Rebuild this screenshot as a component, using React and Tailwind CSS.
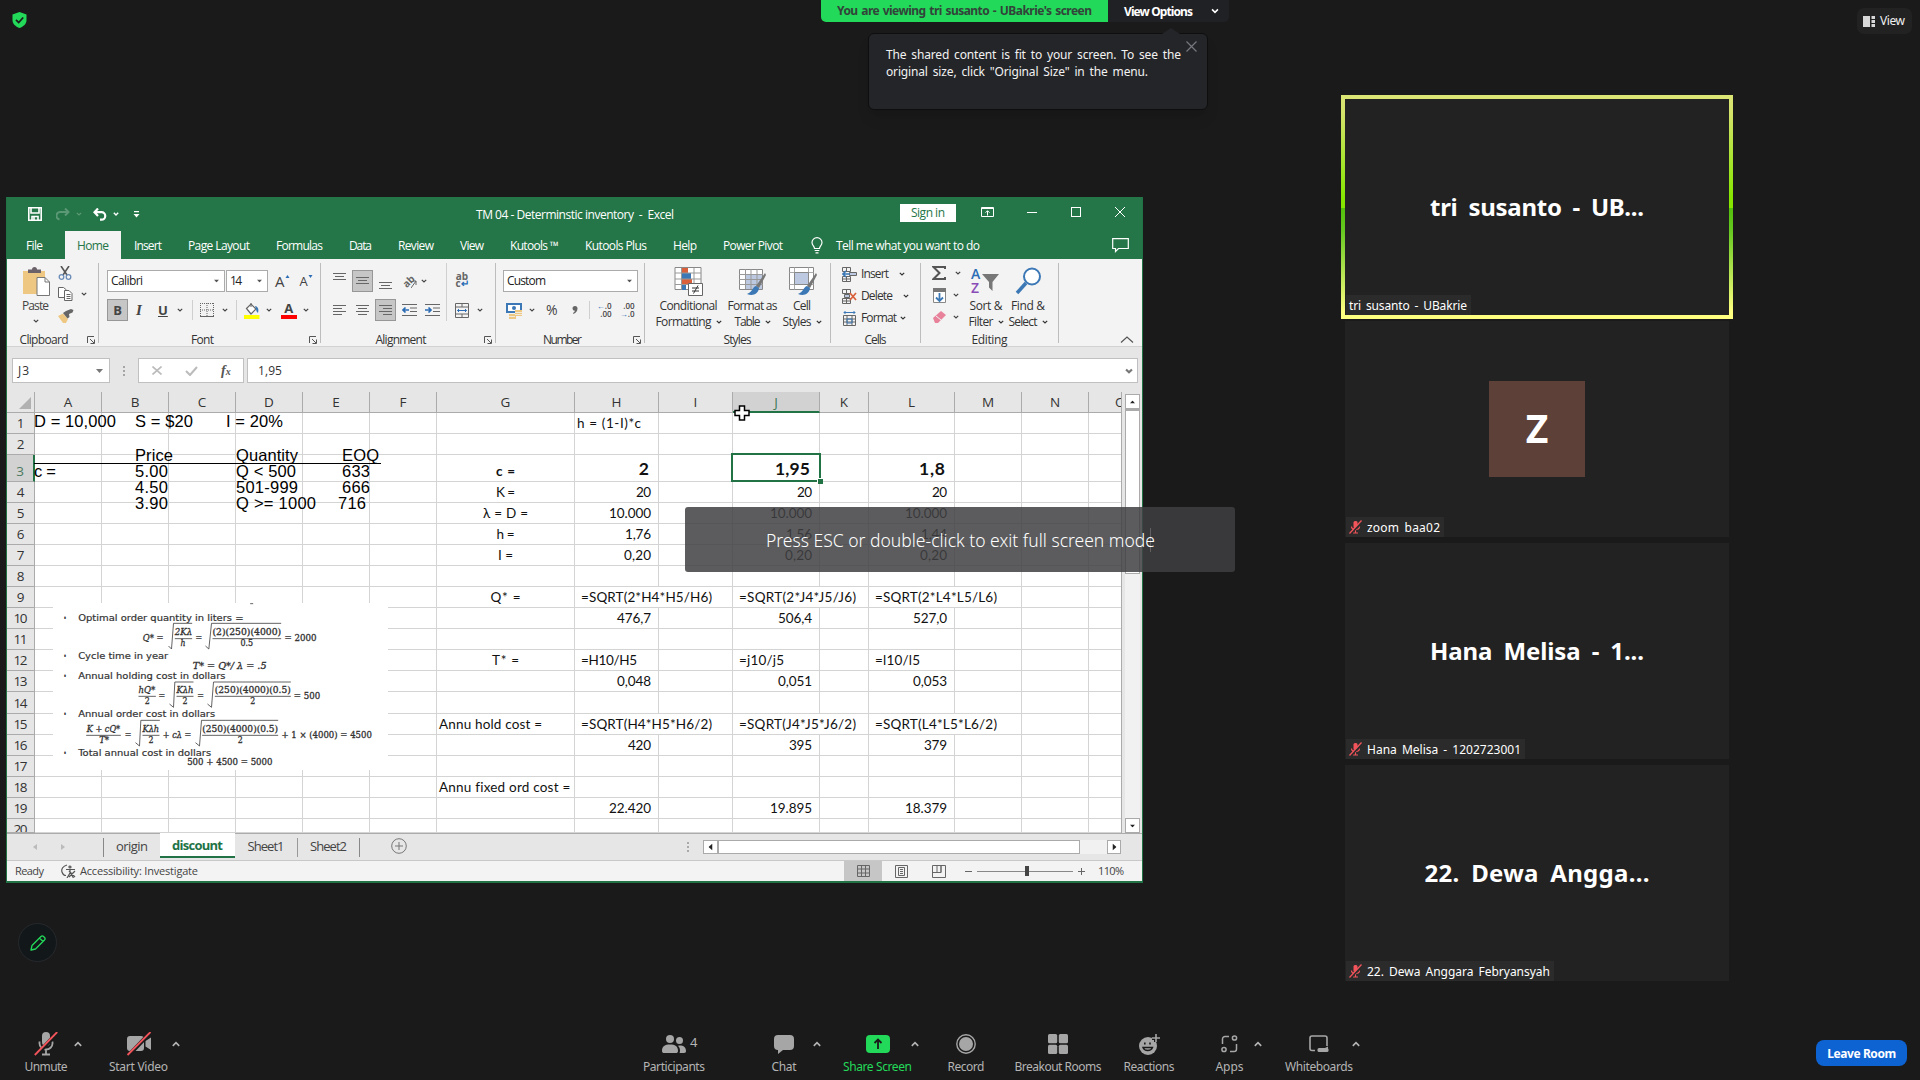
import React, { useLayoutEffect, useRef, useState } from 'react'
import clsx from 'clsx'

// Text set to a fixed width, the letters are spread or tightened to fill it
function Txt({ w, className, children }) {
  const ref = useRef(null)
  const [spacing, setSpacing] = useState(null)

  useLayoutEffect(() => {
    const natural = ref.current.getBoundingClientRect().width
    const n = String(children).length
    if (n > 1) setSpacing((w - natural) / (n - 1))
  }, [])

  return (
    <span
      ref={ref}
      className={clsx('inline-block whitespace-pre shrink-0', className)}
      style={spacing === null ? undefined : { letterSpacing: spacing, width: w }}
    >
      {children}
    </span>
  )
}

function Chevron({ className, size = 6, up = false, stroke = 1.2 }) {
  return (
    <svg width={size} height={size} viewBox="0 0 6 6" className={clsx('shrink-0', className)} fill="none" stroke="currentColor" strokeWidth={stroke}>
      <path d={up ? 'M.6 4.4 3 2l2.4 2.4' : 'M.8 1.8 3 4l2.2-2.2'} />
    </svg>
  )
}

function Triangle({ className }) {
  return (
    <svg width="7" height="4" viewBox="0 0 7 4" className={clsx('shrink-0', className)} fill="currentColor">
      <path d="M0 0h7L3.500 4z" />
    </svg>
  )
}

/* ---------- Excel window ---------- */

function TitleBar() {
  return (
    <div className="flex h-[34px] text-white">
      <div className="flex w-[469px] items-center pl-[21px]">
        <svg width="14" height="14" viewBox="0 0 14 14" fill="none" stroke="currentColor" strokeWidth="1.6">
          <path d="M.8.8h12.400v12.400H.8z M3 1v5h8V1" />
          <path d="M4 13V9.500h6V13" />
          <path d="M6 10v3" />
        </svg>
        <svg width="14" height="13" viewBox="0 0 14 13" className="ml-[14px] opacity-25" fill="none" stroke="currentColor" strokeWidth="2">
          <path d="M9 .5l3.500 3.500L9 7.500M12.500 4H5a3.500 3.500 0 0 0-1.500 7.500" />
        </svg>
        <Chevron className="ml-[6px] opacity-25" />
        <svg width="14" height="13" viewBox="0 0 14 13" className="ml-[11px]" fill="none" stroke="currentColor" strokeWidth="2.200">
          <path d="M5 .5L1.500 4.200 5 8M2 4.200h6.500a3.700 3.700 0 0 1 0 7.500H7" />
        </svg>
        <Chevron className="ml-[6px]" stroke={1.4} />
        <svg width="7" height="7" viewBox="0 0 7 7" className="ml-[14px]" fill="currentColor">
          <path d="M1 0h5v1.200H1zM.5 3h6L3.500 6.500z" />
        </svg>
      </div>
      <Txt w={198} className="mt-[9px] text-[12px] leading-[18px]">{'TM 04 - Determinstic inventory  -  Excel'}</Txt>
      <div className="ml-[226px] mt-[7px] flex h-[18px] w-[56px] justify-center bg-white text-[#247547]">
        <Txt w={34} className="text-[12px] leading-[18px]">Sign in</Txt>
      </div>
      <div className="flex h-[30px] items-center">
        <svg width="13" height="10" viewBox="0 0 13 10" className="ml-[25px]" fill="none" stroke="currentColor">
          <path d="M.5.5h12v9H.5zM.5 1.500h12M6.500 8.500V4M4.500 5.700l2-2 2 2" />
        </svg>
        <span className="ml-[33px] h-px w-[10px] bg-white" />
        <span className="ml-[34px] size-[10px] border border-white" />
        <svg width="10" height="10" viewBox="0 0 10 10" className="ml-[34px]" stroke="currentColor">
          <path d="M0 0l10 10M10 0L0 10" />
        </svg>
      </div>
    </div>
  )
}

const MENU = [
  ['File', 17], ['Home', 32], ['Insert', 28], ['Page Layout', 62], ['Formulas', 47], ['Data', 23], ['Review', 36],
  ['View', 24], ['Kutools ™', 49], ['Kutools Plus', 62], ['Help', 24], ['Power Pivot', 60],
]

function MenuTabs() {
  return (
    <div className="flex h-[28px] text-[12px] leading-[29px] text-white">
      {MENU.map(([label, w]) => (
        <div
          key={label}
          className={clsx(
            label === 'File' && 'pl-[19px] pr-[22px]',
            label === 'Home' && 'bg-[#f3f3f3] px-[12px] text-[#247547]',
            label !== 'File' && label !== 'Home' && 'px-[13px]'
          )}
        >
          <Txt w={w}>{label}</Txt>
        </div>
      ))}
      <svg width="12" height="17" viewBox="0 0 12 17" className="ml-[15px] mt-[6px]" fill="none" stroke="currentColor" strokeWidth="1.200">
        <path d="M3.500 11.500C3.500 9 1 8.500 1 5.500a5 4.800 0 0 1 10 0c0 3-2.500 3.500-2.500 6zM3.700 13.500h4.600M4.500 15.800h3" />
      </svg>
      <Txt w={144} className="ml-[13px]">Tell me what you want to do</Txt>
      <svg width="17" height="15" viewBox="0 0 17 15" className="ml-auto mr-[13px] mt-[7px]" fill="none" stroke="currentColor" strokeWidth="1.200">
        <path d="M.7.700h15.600v9.800H6.500L3.500 13.500v-3H.7z" />
      </svg>
    </div>
  )
}

function Group({ label, w, launcher, className, children }) {
  return (
    <div className={clsx('relative mt-[4px] h-[80px] shrink-0 border-r border-[#bdbdbd] text-[#444]', className)}>
      <div className="h-[69px]">{children}</div>
      <div className="flex justify-center text-[12px] leading-[17px] text-[#333]">
        <Txt w={w} className="-mt-[1px]">{label}</Txt>
      </div>
      {launcher && (
        <svg width="8" height="8" viewBox="0 0 8 8" className="absolute bottom-[-1px] right-[3px]" fill="none" stroke="#555">
          <path d="M.5 7V.5H7M3 3l4 4M7.500 3.500v4h-4" />
        </svg>
      )}
    </div>
  )
}

function Lines({ rows, className }) {
  return (
    <svg width="14" height="14" viewBox="0 0 14 14" className={clsx('shrink-0', className)} stroke="#666">
      {rows.map(([x1, x2, y]) => <path key={y} d={`M${x1} ${y}H${x2}`} />)}
    </svg>
  )
}

function Combo({ text, tw, className }) {
  return (
    <div className={clsx('flex h-[22px] shrink-0 items-center border border-[#ababab] bg-white pl-[3px] pr-[4px] text-[12px] text-[#222]', className)}>
      <Txt w={tw}>{text}</Txt>
      <Triangle className="ml-auto scale-75 text-[#555]" />
    </div>
  )
}

function Clipboard() {
  return (
    <Group label="Clipboard" w={49} launcher className="w-[92px] pr-[17px]">
      <div className="flex w-[91px]">
        <div className="flex w-[42px] flex-col items-center pl-[15px] pt-[4px]">
          <svg width="28" height="29" viewBox="0 0 28 29" className="shrink-0">
            <path d="M1 4h22v23H1z" fill="#eec883" />
            <path d="M6 6V2.500h4a2.500 2.500 0 0 1 5 0h4V6z" fill="#6b6169" />
            <path d="M15 10.500h8l4.500 4.500v13.500H15z" fill="#fff" stroke="#777" />
            <path d="M23 10.500V15h4.500" fill="none" stroke="#777" />
          </svg>
          <Txt w={27} className="mt-px text-[12px] leading-[18px]">Paste</Txt>
          <Chevron className="mt-[3px]" />
        </div>
        <div className="ml-[9px] pt-[3px]">
          <svg width="14" height="14" viewBox="0 0 14 14" fill="none">
            <path d="M3 0l6 9M11 0L5 9" stroke="#555" strokeWidth="1.600" />
            <circle cx="3.500" cy="11" r="2.300" stroke="#6b8cb8" strokeWidth="1.300" />
            <circle cx="10.500" cy="11" r="2.300" stroke="#6b8cb8" strokeWidth="1.300" />
          </svg>
          <div className="mt-[7px] flex items-center">
            <svg width="15" height="14" viewBox="0 0 15 14" fill="#fff" stroke="#666">
              <path d="M.5.500h5L8.500 3v7.500h-8z" />
              <path d="M6.500 3.500h4.500l3 3v7H6.500zM8.500 7.500h4M8.500 9.500h4M8.500 11.500h4" />
            </svg>
            <Chevron className="ml-[8px]" />
          </div>
          <svg width="16" height="14" viewBox="0 0 16 14" className="mt-[8px]">
            <path d="M0 7l5-2.500L10 10l-2 4H5z" fill="#eec883" />
            <path d="M5 4l3-2 5-2 2.500 1-1 2.500L11 5l.5 3-2 1.500z" fill="#666" />
          </svg>
        </div>
      </div>
    </Group>
  )
}

function FontGroup() {
  return (
    <Group label="Font" w={23} launcher className="w-[222px] pl-[8px] pr-[22px]">
      <div className="flex w-[213px] items-center pt-[7px]">
        <Combo text="Calibri" tw={32} className="w-[118px]" />
        <Combo text="14" tw={12} className="ml-[1px] w-[42px]" />
        <span className="ml-[7px] text-[15px] leading-none">A</span>
        <svg width="5" height="3" viewBox="0 0 4 3" className="mb-[10px] shrink-0" fill="#2b6cb5"><path d="M0 3h4L2 0z" /></svg>
        <span className="ml-[10px] text-[13px] leading-none">A</span>
        <svg width="5" height="3" viewBox="0 0 4 3" className="mb-[10px] shrink-0" fill="#2b6cb5"><path d="M0 0h4L2 3z" /></svg>
      </div>
      <div className="mt-[7px] flex h-[22px] w-[213px] items-center">
        <span className="h-[22px] w-[21px] border border-[#979797] bg-[#c6c6c6] text-center text-[13px] font-bold leading-[20px]">B</span>
        <span className="ml-[8px] w-[8px] font-['Liberation_Serif',serif] text-[15px] font-bold italic leading-none">I</span>
        <span className="ml-[14px] text-[13px] font-bold leading-none underline">U</span>
        <Chevron className="ml-[9px]" />
        <span className="ml-[9px] h-[20px] w-px bg-[#cfcfcf]" />
        <svg width="14" height="14" viewBox="0 0 14 14" className="ml-[7px]" fill="none" stroke="#666">
          <path d="M.5 0v13M7 0v13M13.500 0v13M0 .5h14M0 7h14" strokeDasharray="1 1" />
          <path d="M0 13.500h14" />
        </svg>
        <Chevron className="ml-[8px]" />
        <span className="ml-[8px] h-[20px] w-px bg-[#cfcfcf]" />
        <svg width="16" height="17" viewBox="0 0 16 17" className="ml-[7px]">
          <path d="M2.500 6.500L7 2l5 5-5 5z" fill="#fff" stroke="#666" strokeWidth="1.200" />
          <path d="M7 5V1" stroke="#666" />
          <path d="M11 4c3 .5 4 3 3 7-1-1-2-2-2-4z" fill="#3b78b5" />
          <path d="M0 13h15.500v4H0z" fill="#ff0" />
        </svg>
        <Chevron className="ml-[6px]" />
        <div className="ml-[9px] flex h-[17px] w-[16px] flex-col items-center border-b-4 border-[#f00] text-[13px] font-bold leading-[13px]">A</div>
        <Chevron className="ml-[6px]" />
      </div>
    </Group>
  )
}

function Alignment() {
  return (
    <Group label="Alignment" w={51} launcher className="w-[175px] pr-[14px]">
      <div className="flex w-[174px]">
        <div className="w-[126px] border-r border-[#d0d0d0]">
          <div className="flex h-[22px] translate-y-[7px] items-center">
            <Lines className="ml-[12px] -mt-[6px]" rows={[[0, 13, 2.5], [2, 11, 5.5], [0, 13, 8.5]]} />
            <span className="ml-[5px] flex h-[22px] w-[21px] items-center justify-center border border-[#979797] bg-[#c6c6c6]">
              <Lines rows={[[0, 13, 3.5], [2, 11, 6.5], [0, 13, 9.5]]} />
            </span>
            <Lines className="ml-[6px] mt-[8px]" rows={[[0, 13, 4.5], [2, 11, 7.5], [0, 13, 10.5]]} />
            <span className="ml-[9px] -rotate-45 text-[10px] font-bold leading-none text-[#666]">ab</span>
            <svg width="6" height="12" viewBox="0 0 6 12" className="-ml-[3px] mt-[3px]" fill="none" stroke="#666"><path d="M0 11L5 4M5 8V4H2" /></svg>
            <Chevron className="ml-[4px]" />
          </div>
          <div className="mt-[14px] flex h-[22px] items-center">
            <Lines className="ml-[12px]" rows={[[0, 13, 2.5], [0, 9, 5.5], [0, 13, 8.5], [0, 9, 11.5]]} />
            <Lines className="ml-[9px]" rows={[[0, 13, 2.5], [2, 11, 5.5], [0, 13, 8.5], [2, 11, 11.5]]} />
            <span className="ml-[5px] flex h-[22px] w-[21px] items-center justify-center border border-[#979797] bg-[#c6c6c6]">
              <Lines rows={[[0, 13, 2.5], [4, 13, 5.5], [0, 13, 8.5], [4, 13, 11.5]]} />
            </span>
            <svg width="15" height="12" viewBox="0 0 15 12" className="ml-[6px] shrink-0" fill="none" stroke="#666">
              <path d="M0 .5h15M8 4h7M8 7.500h7M0 11.500h15" />
              <path d="M7 6H1M3.500 3.500L1 6l2.500 2.500" stroke="#2b6cb5" strokeWidth="1.700" />
            </svg>
            <svg width="15" height="12" viewBox="0 0 15 12" className="ml-[8px] shrink-0" fill="none" stroke="#666">
              <path d="M0 .5h15M8 4h7M8 7.500h7M0 11.500h15" />
              <path d="M0 6h6M3.500 3.500L6 6 3.500 8.500" stroke="#2b6cb5" strokeWidth="1.700" />
            </svg>
          </div>
        </div>
        <div className="pl-[8px]">
          <div className="flex h-[22px] w-[14px] translate-y-[6px] flex-col justify-center text-center text-[10px] font-bold leading-[7px] text-[#666]">
            <span>ab</span>
            <span>c<span className="text-[#2b6cb5]">↵</span></span>
          </div>
          <div className="mt-[14px] flex h-[22px] items-center">
            <svg width="14" height="15" viewBox="0 0 14 15" fill="none" stroke="#666">
              <path d="M.5.500h13v14H.5zM.5 4h13M.5 11h13M7 0v4M7 11v4" />
              <path d="M2.500 7.500h9M4 6L2.500 7.500 4 9M10 6l1.500 1.500L10 9" stroke="#2b6cb5" />
            </svg>
            <Chevron className="ml-[8px]" />
          </div>
        </div>
      </div>
    </Group>
  )
}

function NumberGroup() {
  return (
    <Group label="Number" w={39} launcher className="w-[149px] pr-[15px]">
      <div className="pl-[7px] pt-[7px]">
        <Combo text="Custom" tw={39} className="w-[135px]" />
      </div>
      <div className="mt-[7px] flex h-[22px] w-[148px] items-center pl-[7px]">
        <svg width="17" height="17" viewBox="0 0 17 17" className="ml-[3px]">
          <path d="M1 2h14v8H1z" fill="#fff" stroke="#3b78b5" strokeWidth="2" />
          <circle cx="8" cy="6" r="2" fill="#3b78b5" />
          <path d="M9 8h7v6H9zM3 12h7v5H3z" fill="#eec883" />
          <path d="M9 10.500h7M9 12.500h7M3 14.500h6" stroke="#f3f3f3" strokeWidth=".8" />
        </svg>
        <Chevron className="ml-[6px]" />
        <span className="ml-[11px] text-[14px] leading-none">%</span>
        <svg width="6" height="8" viewBox="0 0 6 8" className="ml-[14px]" fill="#666"><path d="M.5 2.500a2.500 2.500 0 0 1 5 0C5.500 5 4 7 1.500 8L1 7c1-.5 1.700-1.200 2-2.200A2.400 2.400 0 0 1 .5 2.500z" /></svg>
        <span className="ml-[11px] h-[18px] w-px bg-[#cfcfcf]" />
        <div className="ml-[6px] w-[16px] text-right text-[8px] font-semibold leading-[8px]">
          <div><span className="text-[#2b6cb5]">←</span>.0</div>
          <div>.00</div>
        </div>
        <div className="ml-[7px] w-[16px] text-right text-[8px] font-semibold leading-[8px]">
          <div>.00</div>
          <div><span className="text-[#2b6cb5]">→</span>.0</div>
        </div>
      </div>
    </Group>
  )
}

function BigButton({ icon, top, topW, bottom, bottomW, className }) {
  return (
    <div className={clsx('flex shrink-0 flex-col items-center pt-[4px] text-[12px] text-[#333]', className)}>
      {icon}
      <Txt w={topW} className="mt-[2px] leading-[16px]">{top}</Txt>
      <div className="flex items-center">
        <Txt w={bottomW} className="leading-[15px]">{bottom}</Txt>
        <Chevron className="ml-[4px]" />
      </div>
    </div>
  )
}

function Brush() {
  return (
    <g>
      <path d="M27 6l-9 13 3 2 7-13z" fill="#777" />
      <path d="M18 19c-4 1-3 6-9 8 5 2 11 1 12-6z" fill="#3b78b5" />
    </g>
  )
}

function Styles() {
  return (
    <Group label="Styles" w={28} className="w-[186px]">
      <div className="flex">
        <BigButton
          className="ml-[9px] w-[69px]"
          top="Conditional" topW={58} bottom="Formatting" bottomW={56}
          icon={
            <svg width="30" height="29" viewBox="0 0 30 29">
              <path d="M1 .5h26v22H1z" fill="#fff" stroke="#888" />
              <path d="M8 1h6v5H8zM8 12h10v5H8z" fill="#d9603b" />
              <path d="M8 6h9v6H8zM8 17h4v6H8z" fill="#3b78b5" />
              <path d="M1 6h26M1 12h26M1 17.500h26M7.500 1v22M20 1v22" stroke="#999" />
              <path d="M14.500 16.500h14v12h-14z" fill="#fff" stroke="#666" />
              <path d="M18 21h7M18 24h7M24 18.500l-4.500 8" stroke="#333" />
            </svg>
          }
        />
        <BigButton
          className="w-[59px]"
          top="Format as" topW={50} bottom="Table" bottomW={26}
          icon={
            <svg width="29" height="29" viewBox="0 0 29 29">
              <path d="M1.500 2.500h23v20h-23z" fill="#fff" stroke="#888" />
              <path d="M7 8h17v14H7z" fill="#bcc9e0" />
              <path d="M1 7.500h24M1 12.500h24M1 17.500h24M7.500 2v20M13 2v20M19 2v20" stroke="#999" />
              <Brush />
            </svg>
          }
        />
        <BigButton
          className="w-[40px]"
          top="Cell" topW={18} bottom="Styles" bottomW={29}
          icon={
            <svg width="29" height="29" viewBox="0 0 29 29" className="ml-[3px]">
              <path d="M.5.500h24v22h-24z" fill="#fff" stroke="#888" />
              <path d="M.5 5.500h24M.5 17.500h24M5.500.500v22M19.500.500v22" stroke="#aaa" />
              <path d="M5.500 5.500h14v12h-14z" fill="#bcc9e0" stroke="#888" />
              <Brush />
            </svg>
          }
        />
      </div>
    </Group>
  )
}

function CellsIcon({ kind }) {
  return (
    <svg width="15" height="15" viewBox="0 0 15 15" fill="none" stroke="#666">
      {kind === 'format' ? (
        <>
          <path d="M1.500 4.500h12v10h-12zM1.500 8h12M1.500 11h12M5 4.500v10M10 4.500v10" />
          <path d="M2 1.500h11M3.500 0L2 1.500 3.500 3M11.500 0L13 1.500 11.500 3M5 8h5v4H5z" stroke="#3b78b5" />
        </>
      ) : (
        <>
          <path d="M.5.500h8v4h-8zM4.500.500v4M.5 9.500h8v5h-8zM4.500 9.500v5M.5 12h8" />
          {kind === 'insert'
            ? <><path d="M7.500 5.500h7v3h-7z" fill="#bcc9e0" /><path d="M8 7H1M4 4L1 7l3 3" stroke="#3b78b5" strokeWidth="1.600" /></>
            : <><path d="M2.500 5.500h5v3h-5z" fill="#bcc9e0" /><path d="M8 4l6 7M14 4l-6 7" stroke="#d9603b" strokeWidth="1.700" /></>}
        </>
      )}
    </svg>
  )
}

function Cells() {
  const rows = [['insert', 'Insert', 28, 'ml-[10px]'], ['delete', 'Delete', 32, 'ml-[10px]'], ['format', 'Format', 36, 'ml-[3px]']]
  return (
    <Group label="Cells" w={22} className="w-[90px]">
      <div>
        {rows.map(([kind, label, w, gap]) => (
          <div key={kind} className="flex h-[22px] items-center pl-[11px] text-[12px] text-[#333]">
            <CellsIcon kind={kind} />
            <Txt w={w} className="ml-[4px]">{label}</Txt>
            <Chevron className={gap} />
          </div>
        ))}
      </div>
    </Group>
  )
}

function Editing() {
  return (
    <Group label="Editing" w={36} className="w-[138px]">
      <div className="flex">
        <div className="w-[47px] pl-[11px]">
          <div className="flex h-[20px] items-center">
            <svg width="14" height="14" viewBox="0 0 14 14" fill="none" stroke="#555" strokeWidth="2"><path d="M13 3V1H1.500l6 6-6 6H13v-2" /></svg>
            <Chevron className="ml-[9px]" />
          </div>
          <div className="flex h-[24px] items-center pl-px">
            <svg width="13" height="15" viewBox="0 0 13 15" fill="none">
              <path d="M.5.500h12v14H.5z" fill="#fff" stroke="#888" />
              <path d="M0 0h13v4H0z" fill="#777" />
              <path d="M6.500 5v8M3 9.500L6.500 13 10 9.500" stroke="#3b78b5" strokeWidth="1.800" />
            </svg>
            <Chevron className="ml-[7px]" />
          </div>
          <div className="flex h-[20px] items-center pl-px">
            <svg width="13" height="12" viewBox="0 0 13 12"><path d="M0 7l8-7 5 4-8 8H2z" fill="#e8829b" /><path d="M3 5l5 4" stroke="#f3f3f3" /></svg>
            <Chevron className="ml-[7px]" />
          </div>
        </div>
        <BigButton
          className="w-[36px]"
          top="Sort &" topW={33} bottom="Filter" bottomW={25}
          icon={
            <div className="flex h-[29px] w-[30px]">
              <div className="text-[14px] font-semibold leading-[14px]">
                <div className="text-[#2b6cb5]">A</div>
                <div className="text-[#8a4db8]">Z</div>
              </div>
              <svg width="17" height="17" viewBox="0 0 17 17" className="ml-[2px] mt-[7px]" fill="#777"><path d="M0 0h17l-6.500 8v9L7 13.500V8z" /></svg>
            </div>
          }
        />
        <BigButton
          className="ml-[5px] w-[38px]"
          top="Find &" topW={34} bottom="Select" bottomW={29}
          icon={
            <svg width="27" height="29" viewBox="0 0 27 29" fill="none" stroke="#3b78b5">
              <circle cx="17" cy="9.500" r="8" fill="#fff" strokeWidth="2" />
              <path d="M11 16L2 26" strokeWidth="3.500" />
            </svg>
          }
        />
      </div>
    </Group>
  )
}

function Ribbon() {
  return (
    <div className="flex h-[88px] border-b border-[#d2d2d2] bg-[#f3f3f3]">
      <Clipboard />
      <FontGroup />
      <Alignment />
      <NumberGroup />
      <Styles />
      <Cells />
      <Editing />
      <svg width="14" height="7" viewBox="0 0 14 7" className="ml-auto mr-[8px] mt-[77px]" fill="none" stroke="#555" strokeWidth="1.200"><path d="M1 6.500l6-5.500 6 5.500" /></svg>
    </div>
  )
}

function FormulaBar() {
  return (
    <div className="flex h-[45px] bg-[#e6e6e6] pl-[5px] pt-[11px] text-[12px] text-[#333]">
      <div className="flex h-[25px] w-[98px] items-center border border-[#c0c0c0] bg-white pl-[5px] pr-[6px]">
        <Txt w={11}>J3</Txt>
        <Triangle className="ml-auto text-[#777]" />
      </div>
      <div className="flex w-[28px] flex-col items-center gap-[2px] pt-[8px]">
        <span className="size-[2px] bg-[#a5a5a5]" />
        <span className="size-[2px] bg-[#a5a5a5]" />
        <span className="size-[2px] bg-[#a5a5a5]" />
      </div>
      <div className="flex h-[25px] w-[106px] items-center border border-[#c0c0c0] bg-white">
        <svg width="10" height="9" viewBox="0 0 10 9" className="ml-[13px]" stroke="#bbb" strokeWidth="1.600"><path d="M.5.500l9 8M9.500.500l-9 8" /></svg>
        <svg width="13" height="10" viewBox="0 0 13 10" className="ml-[23px]" fill="none" stroke="#bbb" strokeWidth="2"><path d="M1 5l4 4 7-8" /></svg>
        <span className="ml-[23px] font-['Liberation_Serif',serif] text-[14px] font-bold italic text-[#555]">f<span className="text-[10px]">x</span></span>
      </div>
      <div className="ml-[3px] flex h-[25px] w-[891px] items-center border border-[#c0c0c0] bg-white pl-[10px] pr-[4px]">
        <Txt w={24}>1,95</Txt>
        <Chevron size={8} stroke={1.6} className="ml-auto text-[#777]" />
      </div>
    </div>
  )
}

const COLS = [
  ['A', 'w-[67px]'], ['B', 'w-[67px]'], ['C', 'w-[67px]'], ['D', 'w-[67px]'], ['E', 'w-[67px]'], ['F', 'w-[67px]'],
  ['G', 'w-[138px]'], ['H', 'w-[84px]'], ['I', 'w-[74px]'], ['J', 'w-[87px]'], ['K', 'w-[49px]'], ['L', 'w-[86px]'],
  ['M', 'w-[67px]'], ['N', 'w-[67px]'], ['O', 'w-[32px]'],
]

const ROW_HEIGHT = { 3: 'h-[27px]', 14: 'h-[22px]', 20: 'h-[14px]' }

// value, width, alignment (r = number, c = centred, f = formula text, l = plain text)
const DATA = {
  H1: ['h = (1-I)*c', 64, 'l'],
  G3: ['c =', 19, 'b'], H3: ['2', 10, 'big'], J3: ['1,95', 35, 'big'], L3: ['1,8', 26, 'big'],
  G4: ['K =', 19, 'c'], H4: ['20', 15, 'r'], J4: ['20', 15, 'r'], L4: ['20', 15, 'r'],
  G5: ['λ = D =', 45, 'c'], H5: ['10.000', 42, 'r'], J5: ['10.000', 42, 'r'], L5: ['10.000', 42, 'r'],
  G6: ['h =', 18, 'c'], H6: ['1,76', 26, 'r'], J6: ['1,56', 26, 'r'], L6: ['1,44', 26, 'r'],
  G7: ['I =', 15, 'c'], H7: ['0,20', 27, 'r'], J7: ['0,20', 27, 'r'], L7: ['0,20', 27, 'r'],
  G9: ['Q* =', 30, 'c'], H9: ['=SQRT(2*H4*H5/H6)', 131, 'f'], J9: ['=SQRT(2*J4*J5/J6)', 117, 'f'], L9: ['=SQRT(2*L4*L5/L6)', 122, 'f'],
  H10: ['476,7', 34, 'r'], J10: ['506,4', 34, 'r'], L10: ['527,0', 34, 'r'],
  G12: ['T* =', 27, 'c'], H12: ['=H10/H5', 56, 'f'], J12: ['=j10/j5', 45, 'f'], L12: ['=l10/l5', 45, 'f'],
  H13: ['0,048', 34, 'r'], J13: ['0,051', 34, 'r'], L13: ['0,053', 34, 'r'],
  G15: ['Annu hold cost =', 103, 'l'], H15: ['=SQRT(H4*H5*H6/2)', 131, 'f'], J15: ['=SQRT(J4*J5*J6/2)', 117, 'f'], L15: ['=SQRT(L4*L5*L6/2)', 122, 'f'],
  H16: ['420', 23, 'r'], J16: ['395', 23, 'r'], L16: ['379', 23, 'r'],
  G18: ['Annu fixed ord cost =', 131, 'l'],
  H19: ['22.420', 42, 'r'], J19: ['19.895', 42, 'r'], L19: ['18.379', 42, 'r'],
}

const ALIGN = {
  r: 'justify-end pr-[7px]',
  c: 'justify-center',
  f: 'pl-[6px]',
  l: 'pl-[2px]',
  b: 'justify-center pt-[5px] font-bold',
  big: 'justify-end pr-[9px] pt-[2px] text-[17.5px] font-bold',
}

function Row({ n }) {
  return (
    <div className={clsx('flex', ROW_HEIGHT[n] || 'h-[21px]')}>
      <div
        className={clsx(
          "flex w-[28px] shrink-0 justify-center overflow-hidden border-b border-r font-['Open_Sans',sans-serif] text-[13.5px]",
          n === 20 ? 'items-start' : 'items-center',
          n === 3 ? 'border-b-[#ababab] border-r-[#217346] border-r-2 bg-[#d2d2d2] text-[#4c7a60]' : 'border-[#ababab] bg-[#e6e6e6] text-[#333]'
        )}
      >
        <Txt w={n > 9 ? 14 : 7} className={clsx('leading-[20px]', n === 3 && 'pt-[6px]')}>{n}</Txt>
      </div>
      {COLS.map(([id, w]) => {
        const cell = DATA[id + n]
        const spill = cell && cell[2] === 'f' && n !== 12
        return (
          <div key={id} className={clsx('flex shrink-0 items-center border-b border-[#d4d4d4]', !spill && id !== 'O' && 'border-r', w, cell && ALIGN[cell[2]])}>
            {cell && <Txt w={cell[1]} className="leading-[20px]">{cell[0]}</Txt>}
          </div>
        )
      })}
    </div>
  )
}

// Price break table typed into a text box over the cells
function PriceNotes() {
  const line = 'absolute whitespace-pre'
  return (
    <div className="absolute left-[27px] top-[23px] h-[100px] w-[350px] font-['Liberation_Sans',Arial,sans-serif] text-[16.5px] leading-[16px] text-black">
      <Txt w={82} className={clsx(line, 'left-0 top-[-2px]')}>D = 10,000</Txt>
      <Txt w={58} className={clsx(line, 'left-[101px] top-[-2px]')}>S = $20</Txt>
      <Txt w={57} className={clsx(line, 'left-[192px] top-[-2px]')}>I = 20%</Txt>
      <Txt w={38} className={clsx(line, 'left-[101px] top-[32px]')}>Price</Txt>
      <Txt w={62} className={clsx(line, 'left-[202px] top-[32px]')}>Quantity</Txt>
      <Txt w={37} className={clsx(line, 'left-[308px] top-[32px]')}>EOQ</Txt>
      <div className={clsx(line, 'left-0 top-[48px] h-px w-[347px] bg-black')} />
      <Txt w={22} className={clsx(line, 'left-0 top-[48px]')}>c =</Txt>
      <Txt w={33} className={clsx(line, 'left-[101px] top-[48px]')}>5.00</Txt>
      <Txt w={60} className={clsx(line, 'left-[202px] top-[48px]')}>{'Q < 500'}</Txt>
      <Txt w={28} className={clsx(line, 'left-[308px] top-[48px]')}>633</Txt>
      <Txt w={33} className={clsx(line, 'left-[101px] top-[64px]')}>4.50</Txt>
      <Txt w={62} className={clsx(line, 'left-[202px] top-[64px]')}>501-999</Txt>
      <Txt w={28} className={clsx(line, 'left-[308px] top-[64px]')}>666</Txt>
      <Txt w={33} className={clsx(line, 'left-[101px] top-[80px]')}>3.90</Txt>
      <Txt w={80} className={clsx(line, 'left-[202px] top-[80px]')}>{'Q >= 1000'}</Txt>
      <Txt w={28} className={clsx(line, 'left-[304px] top-[80px]')}>716</Txt>
    </div>
  )
}

const T = ({ x, y, w, children, ...rest }) => (
  <text x={x} y={y} textLength={w} lengthAdjust="spacingAndGlyphs" {...rest}>{children}</text>
)

// EOQ equations pasted as a figure
function Equations() {
  return (
    <svg width="335" height="167" viewBox="159 39 1004 501" className="absolute left-[46px] top-[211px] bg-white">
      <g fontFamily="DejaVu Sans, sans-serif" fontSize="28" fill="#333" stroke="#333" strokeWidth=".6">
        <T x="190" y="92" w="9">•</T>
        <T x="234" y="92" w="496">Optimal order quantity in liters =</T>
        <T x="190" y="208" w="9">•</T>
        <T x="234" y="208" w="270">Cycle time in year</T>
        <T x="190" y="266" w="9">•</T>
        <T x="234" y="266" w="442">Annual holding cost in dollars</T>
        <T x="190" y="381" w="9">•</T>
        <T x="234" y="381" w="411">Annual order cost in dollars</T>
        <T x="190" y="498" w="9">•</T>
        <T x="234" y="498" w="399">Total annual cost in dollars</T>
      </g>
      <g fontFamily="DejaVu Serif, serif" fontSize="25" fill="#333" stroke="#333" strokeWidth=".9">
        <T x="428" y="154" w="62" fontStyle="italic">Q* =</T>
        <T x="524" y="136" w="52" fontStyle="italic">2Kλ</T>
        <T x="541" y="168" w="15" fontStyle="italic">h</T>
        <T x="586" y="153" w="20">=</T>
        <T x="637" y="135" w="206">(2)(250)(4000)</T>
        <T x="721" y="168" w="38">0.5</T>
        <T x="853" y="153" w="96">= 2000</T>

        <T x="578" y="237" w="221" fontStyle="italic">T*  =  Q*/ λ  = .5</T>

        <T x="415" y="308" w="50" fontStyle="italic">hQ*</T>
        <T x="434" y="343" w="15">2</T>
        <T x="475" y="327" w="20">=</T>
        <T x="529" y="308" w="51" fontStyle="italic">Kλh</T>
        <T x="547" y="343" w="15">2</T>
        <T x="591" y="327" w="20">=</T>
        <T x="644" y="308" w="228">(250)(4000)(0.5)</T>
        <T x="750" y="343" w="15">2</T>
        <T x="881" y="326" w="79">= 500</T>

        <T x="260" y="425" w="100" fontStyle="italic">K + cQ*</T>
        <T x="297" y="459" w="30" fontStyle="italic">T*</T>
        <T x="374" y="444" w="20">=</T>
        <T x="427" y="425" w="50" fontStyle="italic">Kλh</T>
        <T x="445" y="459" w="15">2</T>
        <T x="488" y="444" w="85" fontStyle="italic">+ cλ =</T>
        <T x="606" y="425" w="228">(250)(4000)(0.5)</T>
        <T x="713" y="459" w="15">2</T>
        <T x="844" y="443" w="271">+ 1 × (4000) = 4500</T>

        <T x="561" y="525" w="256">500 + 4500 = 5000</T>
      </g>
      <g fill="none" stroke="#444" strokeWidth="2.500">
        <path d="M505 168l9 9 6-77h56M524 146h52M616 168l10 9 8-77h209M637 146h206" />
        <path d="M415 319h52M508 342l12 10 4-76h56M529 319h51M622 342l12 10 6-76h232M644 319h228" />
        <path d="M258 436h104M406 458l12 10 4-77h57M427 436h51M586 458l12 10 6-77h230M606 436h228" />
        <path d="M750 41h9" />
      </g>
    </svg>
  )
}

function VScroll() {
  return (
    <div className="flex flex-1 flex-col bg-[#e6e6e6] pl-[3px] pt-[2px]">
      <div className="flex size-[15px] items-center justify-center border border-[#aaa] bg-white"><Triangle className="rotate-180 scale-75 text-[#222]" /></div>
      <div className="h-[165px] w-[15px] border border-t-2 border-[#aaa] bg-white" />
      <div className="w-[15px] flex-1 bg-[#f1f1f1]" />
      <div className="flex size-[15px] items-center justify-center border border-[#aaa] bg-white"><Triangle className="scale-75 text-[#222]" /></div>
    </div>
  )
}

function Sheet() {
  return (
    <div className="relative flex h-[441px] bg-white">
      <div className="w-[1115px] shrink-0 overflow-hidden border-r border-[#ababab] font-['Lato',sans-serif] text-[13.5px] text-[#111]">
        <div className="flex h-[21px] bg-[#e6e6e6]">
          <div className="flex w-[28px] shrink-0 items-end justify-end border-b border-r border-[#ababab] pb-[3px] pr-[3px]">
            <svg width="12" height="12" viewBox="0 0 12 12" fill="#b1b1b1"><path d="M12 0v12H0z" /></svg>
          </div>
          {COLS.map(([id, w]) => (
            <div
              key={id}
              className={clsx(
                "flex shrink-0 overflow-hidden border-b font-['Open_Sans',sans-serif] text-[13.5px] leading-[20px]",
                id === 'J' ? 'border-b-2 border-b-[#217346] border-r-[#ababab] bg-[#d2d2d2] text-[#3f7a58]' : 'border-[#ababab] text-[#333]',
                id === 'O' ? 'pl-[26px]' : 'justify-center border-r',
                w
              )}
            >
              {id}
            </div>
          ))}
        </div>
        {Array.from({ length: 20 }, (_, i) => <Row key={i} n={i + 1} />)}
      </div>
      <VScroll />
      <PriceNotes />
      <Equations />
      {/* selected cell */}
      <div className="absolute left-[724px] top-[61px] h-[29px] w-[90px] border-2 border-[#217346]" />
      <div className="absolute left-[810px] top-[86px] size-[6px] border-l border-t border-white bg-[#217346]" />
      {/* cell cursor */}
      <svg width="16" height="16" viewBox="0 0 16 16" className="absolute left-[727px] top-[13px]" fill="#fff" stroke="#000" strokeWidth="1.500">
        <path d="M5.500 1h5v4.500H15v5h-4.500V15h-5v-4.500H1v-5h4.500z" />
      </svg>
    </div>
  )
}

function SheetTabs() {
  return (
    <div className="flex h-[27px] border-t border-[#ababab] bg-[#e6e6e6] text-[13px] leading-[24px] text-[#444]">
      <div className="flex w-[97px] items-center border-[#999] pl-[26px]">
        <svg width="4" height="6" viewBox="0 0 4 6" fill="#bbb"><path d="M4 0v6L0 3z" /></svg>
        <svg width="4" height="6" viewBox="0 0 4 6" className="ml-[24px]" fill="#bbb"><path d="M0 0v6l4-3z" /></svg>
        <span className="ml-auto h-[19px] w-px bg-[#888]" />
      </div>
      <div className="flex w-[56px] justify-center"><Txt w={32}>origin</Txt></div>
      <div className="-mt-px flex h-[25px] w-[75px] justify-center border-b-2 border-[#217346] bg-white font-bold text-[#217346]"><Txt w={51}>discount</Txt></div>
      <div className="flex w-[62px] justify-center"><Txt w={37}>Sheet1</Txt></div>
      <span className="mt-[4px] h-[19px] w-px bg-[#999]" />
      <div className="flex w-[61px] justify-center"><Txt w={37}>Sheet2</Txt></div>
      <span className="mt-[4px] h-[19px] w-px bg-[#888]" />
      <svg width="16" height="16" viewBox="0 0 16 16" className="ml-[31px] mt-[4px]" fill="none" stroke="#777"><circle cx="8" cy="8" r="7.300" /><path d="M8 4v8M4 8h8" /></svg>
      <div className="ml-auto mr-[14px] flex flex-col justify-center gap-[2px]">
        <span className="size-[2px] bg-[#aaa]" />
        <span className="size-[2px] bg-[#aaa]" />
        <span className="size-[2px] bg-[#aaa]" />
      </div>
      <div className="mr-[21px] mt-[6px] flex h-[14px] w-[418px] bg-[#f1f1f1]">
        <span className="flex w-[15px] items-center justify-center border border-[#aaa] bg-white"><Triangle className="rotate-90 text-[#222]" /></span>
        <span className="w-[362px] border border-[#aaa] bg-white" />
        <span className="ml-auto flex w-[14px] items-center justify-center border border-[#aaa] bg-white"><Triangle className="-rotate-90 text-[#222]" /></span>
      </div>
    </div>
  )
}

function StatusBar() {
  return (
    <div className="flex h-[21px] items-center border-t border-[#c8c8c8] bg-[#f3f3f3] text-[11px] text-[#444]">
      <Txt w={29} className="ml-[8px] leading-[18px]">Ready</Txt>
      <svg width="16" height="14" viewBox="0 0 16 14" className="ml-[17px]" fill="none" stroke="#555" strokeWidth="1.200">
        <path d="M6 1C2 2 0 5 1 8s3 3.500 4 3.500" />
        <circle cx="9" cy="3" r="1" />
        <path d="M5 5.500h9M9 6v3l-3 5M9.500 9l3 5M8 7l6 6M14 7l-6 6" />
      </svg>
      <Txt w={118} className="ml-[3px] leading-[18px]">Accessibility: Investigate</Txt>
      <div className="ml-auto flex h-full w-[38px] items-center justify-center bg-[#c6c6c6]">
        <svg width="13" height="12" viewBox="0 0 13 12" fill="none" stroke="#666"><path d="M.5.500h12v11H.5zM.5 4h12M.5 8h12M4.500.500v11M8.500.500v11" /></svg>
      </div>
      <svg width="13" height="13" viewBox="0 0 13 13" className="ml-[13px]" fill="none" stroke="#666"><path d="M.5.500h12v12H.5zM3.500 2.500h6v8h-6zM5 4.500h3M5 6.500h3M5 8.500h3" /></svg>
      <svg width="14" height="13" viewBox="0 0 14 13" className="ml-[24px]" fill="none" stroke="#666"><path d="M.5.500h13v12H.5zM5 .5v7H.5M9 .5v7H5M9 7.500V.5" /></svg>
      <span className="ml-[19px] h-px w-[7px] bg-[#666]" />
      <div className="ml-[5px] flex w-[96px] items-center">
        <span className="h-px w-[48px] bg-[#888]" />
        <span className="h-[10px] w-[4px] bg-[#444]" />
        <span className="h-px flex-1 bg-[#888]" />
      </div>
      <svg width="7" height="7" viewBox="0 0 7 7" className="ml-[5px]" stroke="#666"><path d="M0 3.500h7M3.500 0v7" /></svg>
      <Txt w={26} className="ml-[13px] mr-[18px] leading-[18px]">110%</Txt>
    </div>
  )
}

function ExcelWindow() {
  return (
    <div className="flex h-[686px] w-[1137px] flex-col border-x border-b-2 border-[#217346] bg-[#247547] font-['Open_Sans','Noto_Sans',sans-serif]">
      <TitleBar />
      <MenuTabs />
      <Ribbon />
      <FormulaBar />
      <Sheet />
      <SheetTabs />
      <StatusBar />
    </div>
  )
}

/* ---------- Meeting chrome ---------- */

function ShareBanner() {
  return (
    <div className="absolute left-[821px] top-0 flex h-[22px] overflow-hidden rounded-b-[5px] text-[12px] font-bold leading-[21px]">
      <div className="w-[287px] bg-[#23d959] pl-[16px] text-[#32433a]">
        <Txt w={255} className="[word-spacing:1px]">You are viewing tri susanto - UBakrie's screen</Txt>
      </div>
      <div className="flex w-[121px] items-center bg-[#202124] pl-[16px] text-white">
        <Txt w={69}>View Options</Txt>
        <Chevron size={8} stroke={1.2} className="ml-[18px]" />
      </div>
    </div>
  )
}

function FitTooltip() {
  return (
    <div className="absolute left-[868px] top-[33px] h-[77px] w-[340px] rounded-[6px] border border-[#0e0e0f] bg-[#242529] pl-[17px] pt-[12px] text-[12px] leading-[17px] text-[#f2f2f2] shadow-lg [word-spacing:2px]">
      <svg width="18" height="6" viewBox="0 0 18 6" className="absolute -top-[6px] left-[293px]" fill="#242529"><path d="M0 6l9-6 9 6z" /></svg>
      <Txt w={295}>The shared content is fit to your screen. To see the</Txt>
      <Txt w={262}>original size, click "Original Size" in the menu.</Txt>
      <svg width="11" height="11" viewBox="0 0 11 11" className="absolute left-[317px] top-[7px]" stroke="#77777f" strokeWidth="1.200"><path d="M.5.500l10 10M10.500.500l-10 10" /></svg>
    </div>
  )
}

function MutedMic() {
  return (
    <svg width="13" height="14" viewBox="0 0 13 14" fill="none" stroke="#f2545b">
      <rect x="4.500" y="1" width="4" height="7" rx="1.500" fill="#f2545b" stroke="none" />
      <path d="M2.500 6.500c0 4 8 4 8 0M6.500 10v3M4 13h5" strokeWidth="1.200" />
      <path d="M1.500 14L13 2" stroke="#2a2a2a" strokeWidth="2" />
      <path d="M.5 13.500L12.500.5" strokeWidth="1.300" />
    </svg>
  )
}

function Tile({ title, titleW, name, nameW, muted, children }) {
  return (
    <div className="relative flex h-[216px] w-[384px] items-center justify-center bg-[#222]">
      {title && <Txt w={titleW} className="text-[24px] font-bold leading-[30px] text-white [word-spacing:5px]">{title}</Txt>}
      {children}
      <div className="absolute bottom-0 left-px flex h-[20px] items-center bg-[#2b2b2b] pl-[3px] pr-[4px] text-[12px] text-white [word-spacing:2px]">
        {muted && <span className="mr-[5px]"><MutedMic /></span>}
        <Txt w={nameW} className="pt-[2px] leading-[18px]">{name}</Txt>
      </div>
    </div>
  )
}

function Gallery() {
  return (
    <div className="ml-[198px] flex flex-col items-center gap-[6px] pt-[95px]">
      <div className="-mb-[4px] bg-[linear-gradient(180deg,#dbe574_0%,#d4e36a_8%,#86e600_46%,#86e600_50.400%,#55c00c_50.600%,#64c81e_60%,#ffff80_97%)] p-[4px]">
        <Tile title="tri susanto - UB..." titleW={214} name="tri susanto - UBakrie" nameW={118} />
      </div>
      <Tile name="zoom baa02" nameW={73} muted>
        <div className="flex size-[96px] items-center justify-center bg-[#5d4037] pb-[3px] text-[39px] font-bold leading-none text-white">Z</div>
      </Tile>
      <Tile title="Hana Melisa - 1..." titleW={214} name="Hana Melisa - 1202723001" nameW={154} muted />
      <Tile title="22. Dewa Angga..." titleW={225} name="22. Dewa Anggara Febryansyah" nameW={183} muted />
    </div>
  )
}

const G = '#a6a6a6'

const ICONS = {
  mic: (
    <svg width="24" height="24" viewBox="0 0 24 24" fill="none" stroke={G}>
      <rect x="8" y="0" width="8" height="14" rx="4" fill={G} stroke="none" />
      <path d="M5.500 9.500v2a6.500 6 0 0 0 13 0v-2M12 18v4M8 22.500h8" strokeWidth="1.800" />
      <path d="M2 23.500L24 0" stroke="#1a1a1a" strokeWidth="4" />
      <path d="M.8 23L23.200 0" stroke="#f2545b" strokeWidth="1.800" />
    </svg>
  ),
  video: (
    <svg width="26" height="24" viewBox="0 0 26 24">
      <rect x="1" y="4" width="17" height="15" rx="3" fill={G} />
      <path d="M19.500 9L25 5.500v12.500L19.500 14.500z" fill={G} />
      <path d="M2.500 23.500L25 0" stroke="#1a1a1a" strokeWidth="4" />
      <path d="M1.500 23L24.500 0" stroke="#f2545b" strokeWidth="1.800" />
    </svg>
  ),
  participants: (
    <svg width="24" height="18" viewBox="0 0 24 18" fill={G}>
      <circle cx="8" cy="4" r="4" />
      <circle cx="17.500" cy="5.500" r="3.500" />
      <path d="M0 16c0-5 3-6.500 8-6.500s8 1.500 8 6.500c0 1.500-1 2-2 2H2c-1 0-2-.5-2-2zM17.500 18H22c1.500 0 2-.7 2-2 0-3.500-2-5.500-6.500-5.500l-1.500.2c1.500 1.500 2 3 2 5.300 0 .8-.2 1.500-.5 2z" />
    </svg>
  ),
  chat: (
    <svg width="20" height="19" viewBox="0 0 20 19" fill={G}><path d="M4 0h12a4 4 0 0 1 4 4v7a4 4 0 0 1-4 4H9l-5 4v-4a4 4 0 0 1-4-4V4a4 4 0 0 1 4-4z" /></svg>
  ),
  share: (
    <svg width="24" height="18" viewBox="0 0 24 18" fill="none">
      <rect width="24" height="18" rx="4" fill="#23d959" />
      <path d="M12 14V5M8.500 8L12 4.500 15.500 8" stroke="#1a1a1a" strokeWidth="1.800" />
    </svg>
  ),
  record: (
    <svg width="20" height="20" viewBox="0 0 20 20" fill="none" stroke={G}><circle cx="10" cy="10" r="9.200" strokeWidth="1.400" /><circle cx="10" cy="10" r="7" fill={G} stroke="none" /></svg>
  ),
  rooms: (
    <svg width="20" height="20" viewBox="0 0 20 20" fill={G}>
      <rect width="9.200" height="9.200" rx="1.500" /><rect x="10.800" width="9.200" height="9.200" rx="1.500" />
      <rect y="10.800" width="9.200" height="9.200" rx="1.500" /><rect x="10.800" y="10.800" width="9.200" height="9.200" rx="1.500" />
    </svg>
  ),
  reactions: (
    <svg width="22" height="21" viewBox="0 0 22 21" fill="none">
      <circle cx="10" cy="12" r="9" fill={G} />
      <path d="M18 0v8M14 4h8" stroke="#1a1a1a" strokeWidth="4" />
      <path d="M18 0v8M14 4h8" stroke={G} strokeWidth="1.600" />
      <path d="M6.800 8.500v2M12 8.500v2" stroke="#1a1a1a" strokeWidth="1.600" />
      <path d="M5 13.500c1.500 4 8 4 9.500 0z" stroke="#1a1a1a" strokeWidth="1.400" />
    </svg>
  ),
  apps: (
    <svg width="17" height="18" viewBox="0 0 17 18" fill="none" stroke={G} strokeWidth="1.500">
      <path d="M8 1.500H4A2.500 2.500 0 0 0 1.500 4v5M9 16.500h4a2.500 2.500 0 0 0 2.500-2.500V9" />
      <circle cx="13.500" cy="3" r="2.100" /><circle cx="3" cy="14.500" r="2.100" />
    </svg>
  ),
  whiteboards: (
    <svg width="20" height="18" viewBox="0 0 20 18" fill="none">
      <path d="M6 15.500H3A2 2 0 0 1 1 13.500V3a2 2 0 0 1 2-2h13a2 2 0 0 1 2 2v8" stroke={G} strokeWidth="1.600" />
      <rect x="8.500" y="13" width="11" height="4" rx="1.500" fill={G} />
      <path d="M16 13l3-1.500v3z" fill={G} />
    </svg>
  ),
}

const TOOLS = [
  { id: 'mic', label: 'Unmute', w: 43, box: 'ml-[16px] w-[60px]', caret: '-ml-[6px]' },
  { id: 'video', label: 'Start Video', w: 59, box: 'ml-[16px] w-[73px]', caret: '-ml-[7px]' },
  { id: 'participants', label: 'Participants', w: 62, box: 'ml-[454px] w-[72px]', count: 4 },
  { id: 'chat', label: 'Chat', w: 25, box: 'ml-[50px] w-[48px]', caret: 'ml-px' },
  { id: 'share', label: 'Share Screen', w: 69, box: 'ml-[15px] w-[75px]', caret: '-ml-[8px]' },
  { id: 'record', label: 'Record', w: 37, box: 'ml-[18px] w-[50px]' },
  { id: 'rooms', label: 'Breakout Rooms', w: 87, box: 'ml-[17px] w-[100px]' },
  { id: 'reactions', label: 'Reactions', w: 51, box: 'ml-[10px] w-[62px]' },
  { id: 'apps', label: 'Apps', w: 28, box: 'ml-[27px] w-[45px]', caret: '-ml-[2px]' },
  { id: 'whiteboards', label: 'Whiteboards', w: 68, box: 'ml-[14px] w-[78px]', caret: '-ml-[10px]' },
]

function Toolbar() {
  return (
    <div className="flex h-[60px] text-[#b4b4b4]">
      {TOOLS.map((t) => (
        <React.Fragment key={t.id}>
          <div className={clsx('flex shrink-0 flex-col items-center pt-[12px] text-[12px]', t.box)}>
            <div className="relative flex h-[24px] items-center">
              {ICONS[t.id]}
              {t.count && <span className="absolute left-[28px] top-[1px] text-[13px] leading-[18px]">{t.count}</span>}
            </div>
            <Txt w={t.w} className={clsx('mt-[3px] leading-[16px]', t.id === 'share' && 'text-[#23d959]')}>{t.label}</Txt>
          </div>
          {t.caret && (
            <div className={clsx('z-10 flex w-[16px] shrink-0 justify-center pt-[20px]', t.caret)}>
              <Chevron up size={8} />
            </div>
          )}
        </React.Fragment>
      ))}
      <button className="ml-auto mr-[13px] mt-[20px] h-[26px] w-[91px] rounded-[8px] bg-[#0e63d3] text-[12px] font-bold leading-[25px] text-white">
        <Txt w={69}>Leave Room</Txt>
      </button>
    </div>
  )
}

export default function App() {
  return (
    <div className="relative flex h-[1080px] w-[1920px] flex-col overflow-hidden bg-[#1a1a1a] font-['Noto_Sans','Open_Sans',sans-serif]">
      <div className="flex h-[1020px]">
        <div className="pl-[6px] pt-[197px]">
          <ExcelWindow />
          <div className="ml-[12px] mt-[40px] flex size-[39px] items-center justify-center rounded-full border border-[#26292c] bg-[#12171a]">
            <svg width="16" height="16" viewBox="0 0 16 16" fill="none" stroke="#23d959" strokeWidth="1.300">
              <path d="M1 15l1-4.500L11 1.500a1.800 1.800 0 0 1 2.500 0l1 1a1.800 1.800 0 0 1 0 2.500L5.500 14zM9.500 3L13 6.500" strokeLinejoin="round" />
            </svg>
          </div>
        </div>
        <Gallery />
      </div>
      <Toolbar />

      {/* floating controls */}
      <svg width="15" height="16" viewBox="0 0 15 16" className="absolute left-[12px] top-[12px]" fill="none">
        <path d="M7.500 0L14.500 2.500v5.500c0 4-3 6.500-7 8-4-1.500-7-4-7-8V2.500z" fill="#23d959" />
        <path d="M4 7.800l2.700 2.700 4.500-5" stroke="#1a1a1a" strokeWidth="1.700" />
      </svg>
      <ShareBanner />
      <FitTooltip />
      <div className="absolute left-[1857px] top-[8px] flex h-[26px] w-[55px] items-center rounded-[7px] bg-[#222] pl-[6px] text-[12px] text-[#f0f0f0]">
        <svg width="12" height="11" viewBox="0 0 12 11" fill="#d8d8d8"><path d="M0 0h7v11H0zM8.500 0H12v3H8.500zM8.500 4H12v3H8.500zM8.500 8H12v3H8.500z" /></svg>
        <Txt w={25} className="ml-[5px] leading-[18px]">View</Txt>
      </div>
      <div className="absolute left-[685px] top-[507px] flex h-[65px] w-[550px] items-center justify-center rounded-[3px] bg-[#3f4042]/85 pl-px text-[17.5px] text-white">
        <Txt w={389} className="pt-[2px] font-light">Press ESC or double-click to exit full screen mode</Txt>
      </div>
      <span className="absolute left-[1150px] top-[528px] h-[24px] w-px bg-white/20" />
    </div>
  )
}
